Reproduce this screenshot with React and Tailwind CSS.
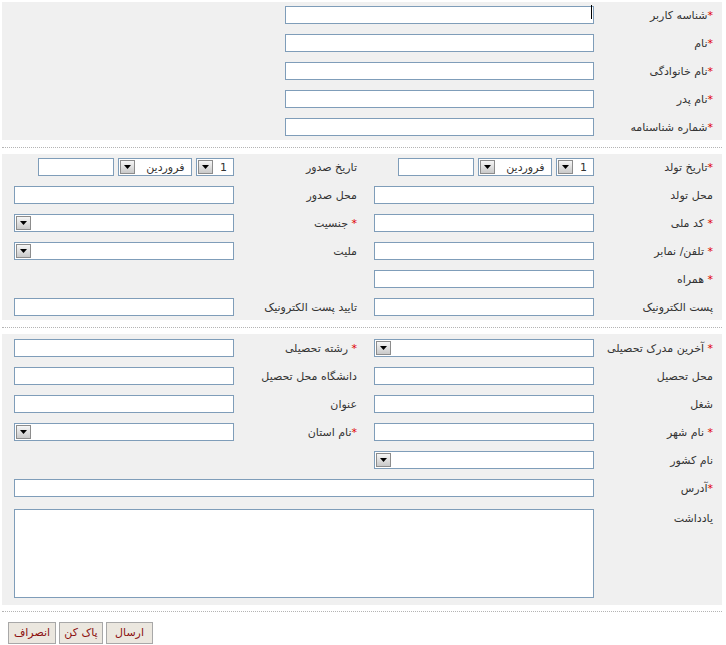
import React from 'react'

const font = { fontFamily: 'Tahoma, "DejaVu Sans", sans-serif' }

const Star = ({ space }) => (
    <span className="text-[#e00000]">{space ? '* ' : '*'}</span>
)

const Label = ({ text, req, space, wide }) => (
    <div className={wide ? 'w-[140px] shrink-0 pr-[17px] pt-[3px] text-[11px] text-[#333] whitespace-nowrap' : 'w-[128px] shrink-0 pr-[9px] pt-[3px] text-[11px] text-[#333] whitespace-nowrap'}>
        {req && <Star space={space} />}
        {text}
    </div>
)

const Field = ({ className }) => (
    <input className={'h-[18px] border border-[#7f9db9] bg-white outline-none shrink-0 ' + className} />
)

const Arrow = () => (
    <div className="w-[15px] h-[14px] ml-[1px] border border-[#8c8c8c] bg-gradient-to-b from-[#f6f6f6] to-[#c9c9c9] flex items-center justify-center shrink-0">
        <svg width="7" height="4" viewBox="0 0 7 4">
            <path d="M0 0h7L3.5 4z" fill="#000" />
        </svg>
    </div>
)

const Select = ({ className, value }) => (
    <div className={'h-[18px] border border-[#7f9db9] bg-white flex items-center justify-between shrink-0 ' + className}>
        <span className="pr-[6px] pt-[1px] text-[11px] text-[#333] leading-none">{value}</span>
        <Arrow />
    </div>
)

const DateGroup = () => (
    <div className="w-[220px] shrink-0 flex items-center justify-between pl-[24px]">
        <Select className="w-[38px]" value="1" />
        <Select className="w-[74px] mr-[4px]" value="فروردین" />
        <Field className="w-[76px] mr-[3px]" />
    </div>
)

const Row = ({ children }) => (
    <div className="h-[18px] flex items-center">{children}</div>
)

const Separator = ({ top, bottom }) => (
    <div className={'border-t border-dotted border-[#b4b4b4] ' + top + ' ' + bottom} />
)

export default function App() {
    return (
        <div dir="rtl" style={font} className="w-[726px] h-[645px] bg-white pr-[4px] pl-[2px] pt-[2px]">
            {/* identity */}
            <div className="bg-[#f0f0f0] pt-[4px] pb-[4px] flex flex-col gap-[10px]">
                <Row>
                    <Label text="شناسه کاربر" req />
                    <div className="relative">
                        <Field className="w-[309px]" />
                        <div className="absolute right-[2px] top-[2px] w-[1px] h-[14px] bg-black" />
                    </div>
                </Row>
                <Row><Label text="نام" req /><Field className="w-[309px]" /></Row>
                <Row><Label text="نام خانوادگی" req /><Field className="w-[309px]" /></Row>
                <Row><Label text="نام پدر" req /><Field className="w-[309px]" /></Row>
                <Row><Label text="شماره شناسنامه" req /><Field className="w-[309px]" /></Row>
            </div>

            <Separator top="mt-[7px]" bottom="mb-[6px]" />

            {/* personal */}
            <div className="bg-[#f0f0f0] pt-[4px] pb-[4px] flex flex-col gap-[10px]">
                <Row>
                    <Label text="تاریخ تولد" req />
                    <DateGroup />
                    <Label text="تاریخ صدور" wide />
                    <DateGroup />
                </Row>
                <Row>
                    <Label text="محل تولد" />
                    <Field className="w-[220px]" />
                    <Label text="محل صدور" wide />
                    <Field className="w-[220px]" />
                </Row>
                <Row>
                    <Label text="کد ملی" req space />
                    <Field className="w-[220px]" />
                    <Label text="جنسیت" req space wide />
                    <Select className="w-[220px]" value="" />
                </Row>
                <Row>
                    <Label text="تلفن/ نمابر" req space />
                    <Field className="w-[220px]" />
                    <Label text="ملیت" wide />
                    <Select className="w-[220px]" value="" />
                </Row>
                <Row>
                    <Label text="همراه" req space />
                    <Field className="w-[220px]" />
                </Row>
                <Row>
                    <Label text="پست الکترونیک" />
                    <Field className="w-[220px]" />
                    <Label text="تایید پست الکترونیک" wide />
                    <Field className="w-[220px]" />
                </Row>
            </div>

            <Separator top="mt-[7px]" bottom="mb-[6px]" />

            {/* education & address */}
            <div className="bg-[#f0f0f0] pt-[5px] pb-[7px] flex flex-col gap-[10px]">
                <Row>
                    <Label text="آخرین مدرک تحصیلی" req space />
                    <Select className="w-[220px]" value="" />
                    <Label text="رشته تحصیلی" req space wide />
                    <Field className="w-[220px]" />
                </Row>
                <Row>
                    <Label text="محل تحصیل" />
                    <Field className="w-[220px]" />
                    <Label text="دانشگاه محل تحصیل" wide />
                    <Field className="w-[220px]" />
                </Row>
                <Row>
                    <Label text="شغل" />
                    <Field className="w-[220px]" />
                    <Label text="عنوان" wide />
                    <Field className="w-[220px]" />
                </Row>
                <Row>
                    <Label text="نام شهر" req space />
                    <Field className="w-[220px]" />
                    <Label text="نام استان" req wide />
                    <Select className="w-[220px]" value="" />
                </Row>
                <Row>
                    <Label text="نام کشور" />
                    <Select className="w-[220px]" value="" />
                </Row>
                <Row>
                    <Label text="آدرس" req />
                    <Field className="w-[580px]" />
                </Row>
                <div className="flex items-start mt-[2px]">
                    <div className="w-[128px] shrink-0 pr-[9px] pt-[2px] text-[11px] text-[#333]">یادداشت</div>
                    <textarea className="w-[580px] h-[89px] border border-[#7f9db9] bg-white outline-none resize-none" />
                </div>
            </div>

            <Separator top="mt-[6px]" bottom="mb-[10px]" />

            {/* actions */}
            <div dir="ltr" className="flex gap-[3px] pl-[6px]">
                <button className="h-[22px] w-[48px] border border-[#a8a8a8] bg-[#ebe7df] text-[11px] text-[#8b1010]">انصراف</button>
                <button className="h-[22px] w-[44px] border border-[#a8a8a8] bg-[#ebe7df] text-[11px] text-[#8b1010]">پاک کن</button>
                <button className="h-[22px] w-[47px] border border-[#a8a8a8] bg-[#ebe7df] text-[11px] text-[#8b1010]">ارسال</button>
            </div>
        </div>
    )
}
